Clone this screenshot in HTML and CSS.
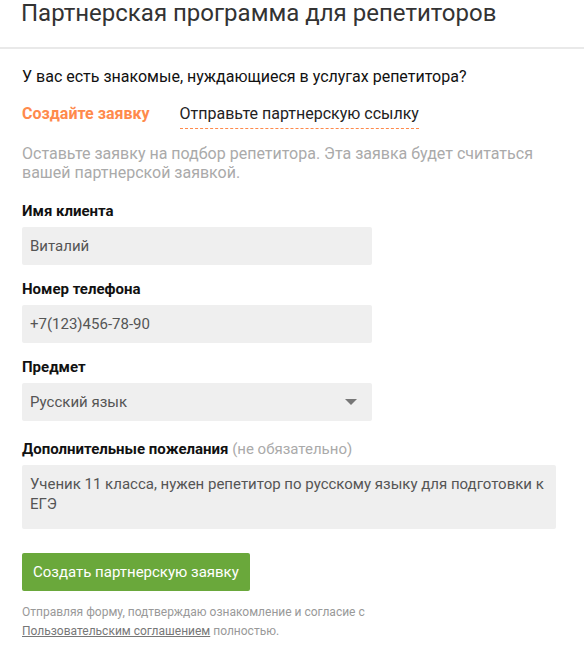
FILE: index.html
```html
<!DOCTYPE html>
<html lang="ru">
<head>
<meta charset="utf-8">
<link rel="stylesheet" href="styles.css">
</head>
<body>
<div class="page">
  <header class="header">
    <h1 class="title">Партнерская программа для репетиторов</h1>
  </header>
  <main class="content">
    <p class="question">У вас есть знакомые, нуждающиеся в услугах репетитора?</p>
    <div class="tabs">
      <span class="tab tab-active">Создайте заявку</span>
      <span class="tab tab-link">Отправьте партнерскую ссылку</span>
    </div>
    <p class="desc">Оставьте заявку на подбор репетитора. Эта заявка будет считаться вашей партнерской заявкой.</p>
    <form class="form">
      <div class="field">
        <div class="label">Имя клиента</div>
        <div class="input">Виталий</div>
      </div>
      <div class="field">
        <div class="label">Номер телефона</div>
        <div class="input">+7(123)456-78-90</div>
      </div>
      <div class="field">
        <div class="label">Предмет</div>
        <div class="input select"><span>Русский язык</span><span class="arrow"></span></div>
      </div>
      <div class="field field-wide">
        <div class="label">Дополнительные пожелания <span class="optional">(не обязательно)</span></div>
        <div class="textarea">Ученик 11 класса, нужен репетитор по русскому языку для подготовки к ЕГЭ</div>
      </div>
      <button type="button" class="submit">Создать партнерскую заявку</button>
      <p class="agree">Отправляя форму, подтверждаю ознакомление и согласие с <a class="agree-link" href="#">Пользовательским соглашением</a> полностью.</p>
    </form>
  </main>
</div>
</body>
</html>
```
FILE: styles.css
```css
* { box-sizing: border-box; }
html, body { margin: 0; padding: 0; background: #fff; }
body { font-family: Roboto, "Noto Sans", sans-serif; color: #222; }
.header {
  border-bottom: 2px solid #e9e9e9;
  padding: 0 0 0 21px;
  height: 49px;
}
.title {
  margin: 0;
  font-size: 24px;
  font-weight: 400;
  line-height: 26px;
  color: #333;
}
.content { padding: 18px 22px 0 22px; }
.question {
  margin: 0;
  font-size: 16px;
  line-height: 20px;
  color: #111;
}
.tabs {
  display: flex;
  gap: 30px;
  margin-top: 17px;
  font-size: 16px;
  line-height: 20px;
}
.tab-active { color: #ff8a4c; font-weight: 700; }
.tab-link { color: #222; border-bottom: 1px dashed #ff8a4c; padding-bottom: 4px; }
.desc {
  margin: 15px 0 0 0;
  font-size: 16px;
  line-height: 19px;
  color: #aaa;
}
.form { margin-top: 21px; }
.field { margin-bottom: 16px; }
.field-wide { margin-top: 20px; }
.label {
  font-size: 15px;
  font-weight: 700;
  line-height: 16px;
  color: #111;
  margin-bottom: 8px;
}
.optional { font-weight: 400; color: #aaa; }
.input {
  width: 350px;
  height: 38px;
  background: #efefef;
  border-radius: 2px;
  padding: 0 8px;
  display: flex;
  align-items: center;
  font-size: 15px;
  color: #555;
}
.select { justify-content: space-between; padding-right: 15px; }
.arrow {
  width: 0; height: 0;
  border-left: 6px solid transparent;
  border-right: 6px solid transparent;
  border-top: 6px solid #777;
}
.textarea {
  width: 534px;
  height: 64px;
  background: #efefef;
  border-radius: 2px;
  padding: 9px 8px;
  font-size: 15px;
  line-height: 20px;
  color: #555;
}
.submit {
  display: block;
  margin-top: 24px;
  height: 38px;
  padding: 0 11px;
  border: none;
  border-radius: 2px;
  background: #6aa83b;
  color: #fff;
  font-family: Roboto, "Noto Sans", sans-serif;
  font-size: 15px;
}
.agree {
  margin: 12px 0 0 0;
  font-size: 12px;
  line-height: 19px;
  color: #999;
  width: 360px;
}
.agree-link { color: #777; text-decoration: underline; }
```
